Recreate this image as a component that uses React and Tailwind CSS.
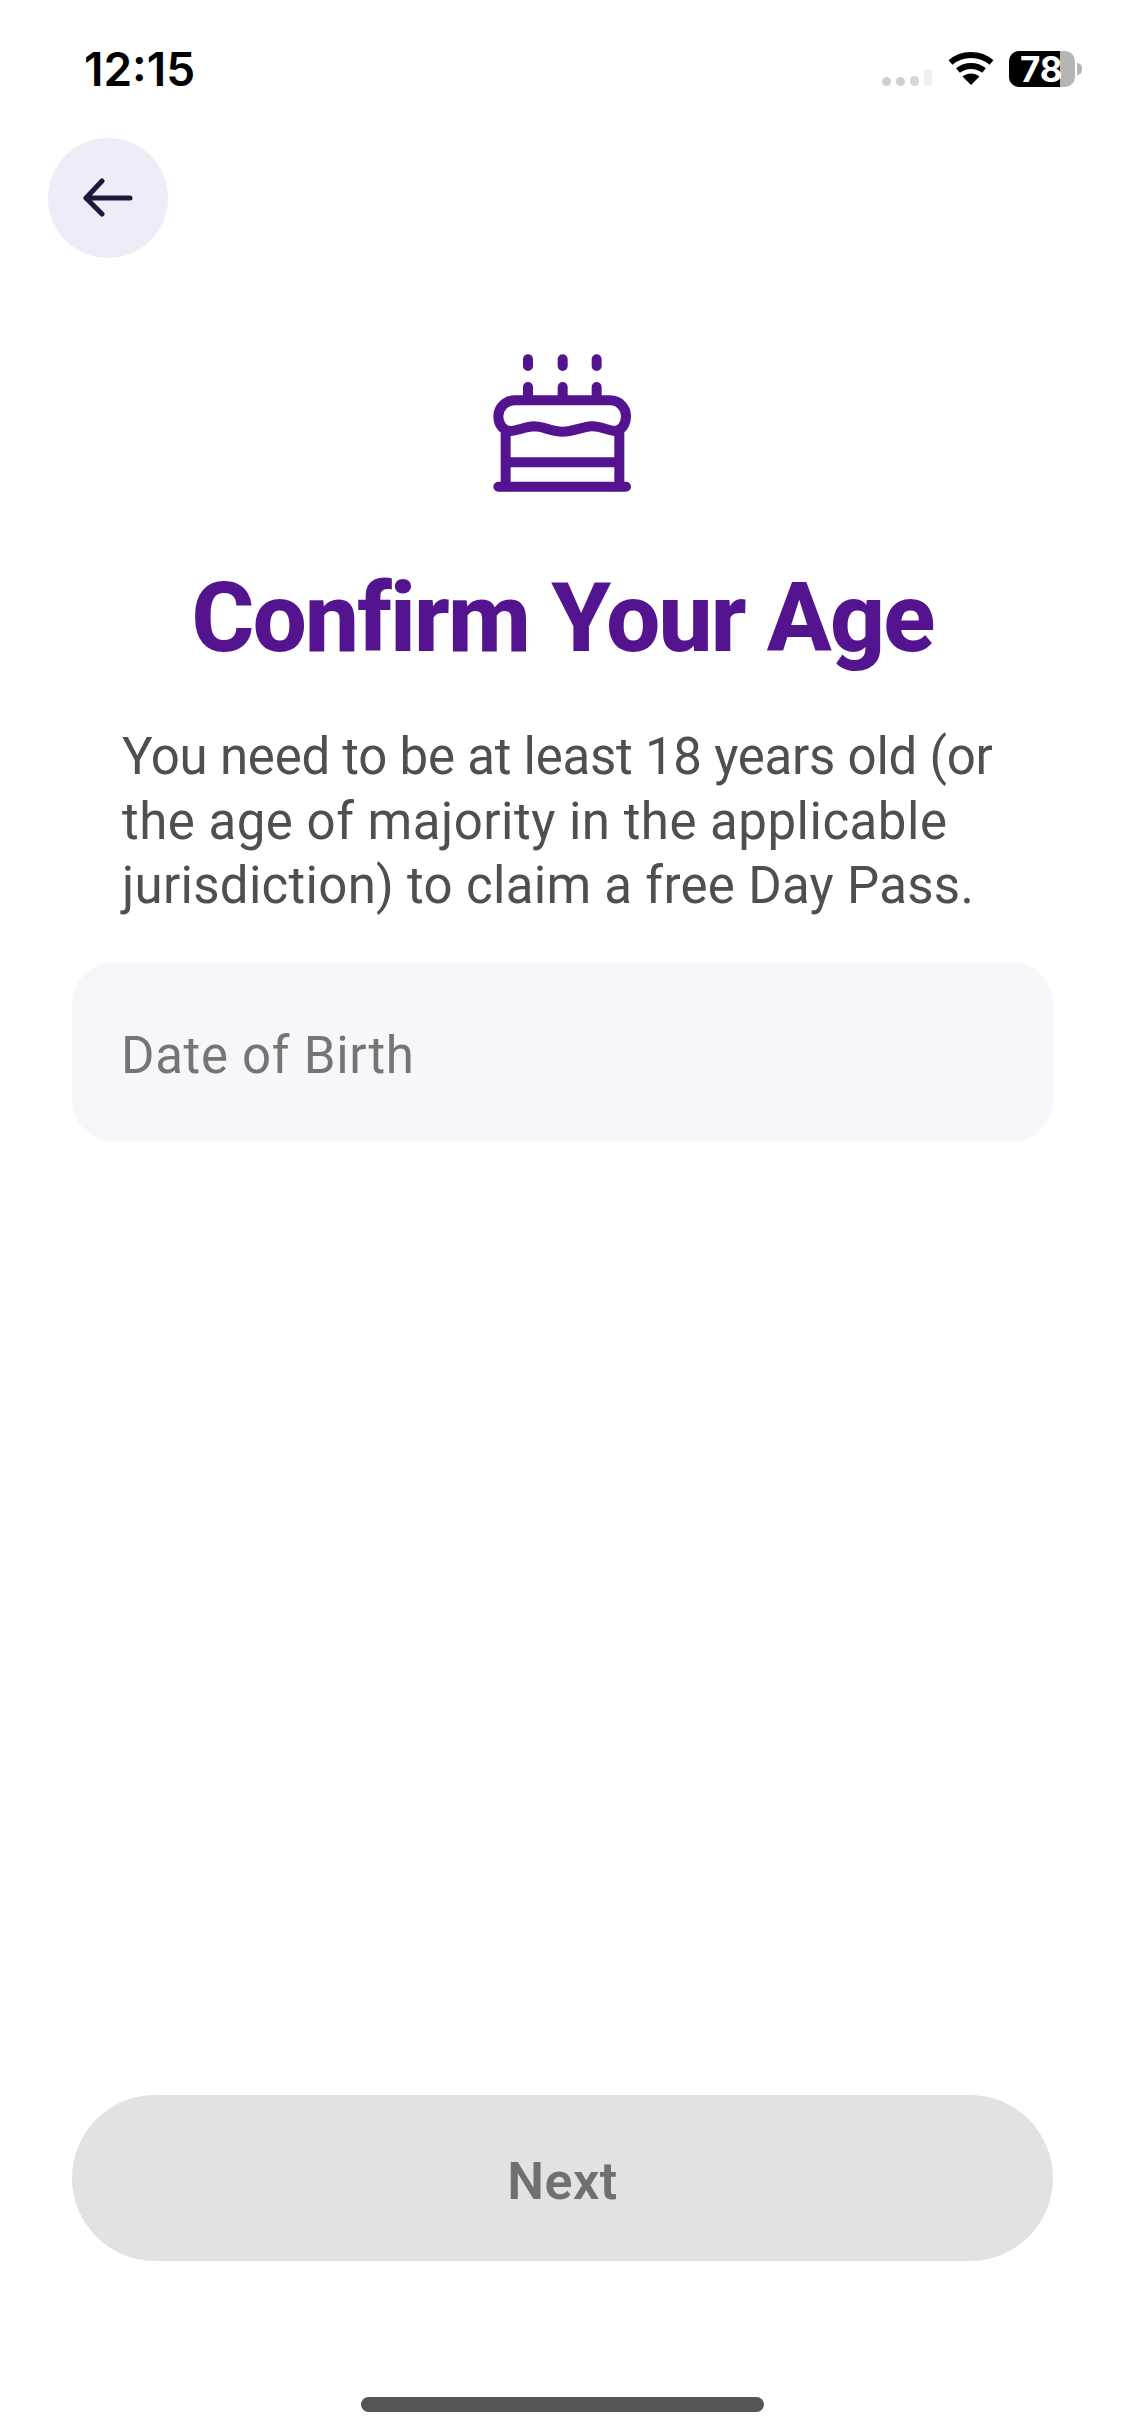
const fontBody = { fontFamily: "Roboto, sans-serif" };

function StatusBar() {
  return (
    <div className="flex h-[138px] shrink-0 items-start justify-between pr-[43px] pl-[84px]">
      <span className="mt-[43px] font-['Inter',sans-serif] text-[46px] leading-[52px] font-semibold text-black">12:15</span>
      <div className="mt-[51px] flex items-start">
        {/* signal dots */}
        <div className="mt-[18px] mr-[16px] flex items-end gap-[5px]">
          <span className="h-[9px] w-[9px] rounded-full bg-[#d0d0d0]" />
          <span className="h-[9px] w-[9px] rounded-full bg-[#d0d0d0]" />
          <span className="h-[10px] w-[9px] rounded-full bg-[#d6d6d6]" />
          <span className="h-[17px] w-[8px] rounded-[3px] bg-[#f1f1f1]" />
        </div>
        <svg width="46" height="34" viewBox="0 0 46 34" className="mr-[15px]">
          <path d="M2.5 11.5C14 1.5 32 1.5 43.5 11.5" fill="none" stroke="#000" strokeWidth="6" />
          <path d="M10 19.5C17.5 13.5 28.5 13.5 36 19.5" fill="none" stroke="#000" strokeWidth="6" />
          <path d="M23 34L14.5 25.5C19.5 21.5 26.5 21.5 31.5 25.5Z" fill="#000" />
        </svg>
        <div className="relative flex h-[36px] w-[66px] items-center rounded-[10px] bg-[#b5b5b5]">
          <div className="h-full w-[51px] rounded-l-[10px] bg-black" />
          <span className="absolute left-[11px] font-['Inter',sans-serif] text-[35px] leading-[36px] font-bold text-white">78</span>
        </div>
        <div className="mt-[12px] ml-[2px] h-[12px] w-[5px] rounded-r-full bg-[#b5b5b5]" />
      </div>
    </div>
  );
}

function CakeIcon() {
  return (
    <svg width="200" height="170" viewBox="0 0 600 510" fill="none" stroke="#54148f" strokeWidth="30" strokeLinecap="round" strokeLinejoin="round" className="ml-[460px] block">
      <path d="M204 88V108M308 88V108M410 88V108" />
      <path d="M204 171V205M308 171V205M410 171V205" />
      <path d="M165 211H450C480 211 498 235 498 258C498 284 484 302 464 303C440 300 420 288 395 289C365 291 340 305 308 305C275 305 250 289 222 289C195 290 175 302 150 303C130 302 115 284 115 258C115 235 135 211 165 211Z" />
      <path d="M137 310V468M478 310V468M137 397H478M115 470H498" />
    </svg>
  );
}

export default function App() {
  return (
    <div className="flex h-[2436px] w-[1125px] flex-col overflow-hidden bg-white" style={fontBody}>
      <StatusBar />

      <button className="ml-[48px] flex h-[120px] w-[120px] shrink-0 items-center justify-center rounded-full bg-[#efecf7]">
        <svg width="50" height="40" viewBox="0 0 50 40" fill="none" stroke="#1c1a3a" strokeWidth="5" strokeLinecap="round" strokeLinejoin="round">
          <path d="M3 20H47M19 3L3 20L19 36" />
        </svg>
      </button>

      <div className="mt-[72px]">
        <CakeIcon />
      </div>

      <h1 className="mt-[63px] text-center text-[96px] leading-[110px] font-extrabold tracking-[-1.8px] text-[#54148f]">Confirm Your Age</h1>

      <p className="mt-[52px] pl-[122px] text-[51px] leading-[64.5px] text-[#4f4f4f]">
        <span className="block tracking-[-0.24px] whitespace-nowrap">You need to be at least 18 years old (or</span>
        <span className="block tracking-[0.5px] whitespace-nowrap">the age of majority in the applicable</span>
        <span className="block tracking-[0.3px] whitespace-nowrap">jurisdiction) to claim a free Day Pass.</span>
      </p>

      <div className="mx-[72px] mt-[43px] flex h-[180px] shrink-0 items-center rounded-[42px] bg-[#f7f7fb] pt-[10px] pl-[49px] text-[51px] tracking-[0.7px] text-[#757575]">Date of Birth</div>

      <div className="flex-1" />

      <button className="mx-[72px] flex h-[166px] shrink-0 items-center justify-center rounded-[83px] bg-[#e2e2e4] pt-[8px] text-[52px] font-semibold tracking-[0.5px] text-[#707070]">Next</button>

      <div className="mx-auto mt-[136px] mb-[24px] h-[15px] w-[403px] shrink-0 rounded-full bg-[#555555]" />
    </div>
  );
}
